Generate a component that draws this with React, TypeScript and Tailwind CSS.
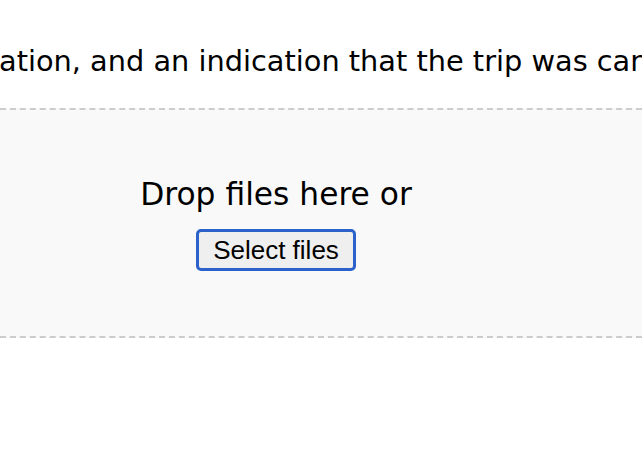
import React from 'react';

const App: React.FC = () => {
  return (
    <div className="w-[642px] h-[462px] overflow-hidden bg-white text-black">
      {/* Intro line, clipped on both sides */}
      <p
        className="mt-[45px] -ml-[1px] whitespace-nowrap text-[28.8px] leading-[32px] text-black"
        style={{ fontFamily: '"DejaVu Sans", Verdana, sans-serif' }}
      >
        ation, and an indication that the trip was cancelled.
      </p>

      {/* Drop zone */}
      <div className="mt-[31px] h-[230px] border-y-2 border-dashed border-[#cccccc] bg-[#f9f9f9]">
        <div className="flex w-[552px] flex-col items-center pt-[66px]">
          <span
            className="text-[31.3px] leading-[36px] text-black"
            style={{ fontFamily: '"DejaVu Sans", Verdana, sans-serif' }}
          >
            Drop files here or
          </span>
          <button
            type="button"
            className="mt-[17px] rounded-[5px] border-[3px] border-[#2c62c9] bg-[#efefef] px-[14px] py-[3px] text-[26px] leading-[30px] text-black"
            style={{ fontFamily: '"Liberation Sans", Arial, sans-serif' }}
          >
            Select files
          </button>
        </div>
      </div>
    </div>
  );
};

export default App;
